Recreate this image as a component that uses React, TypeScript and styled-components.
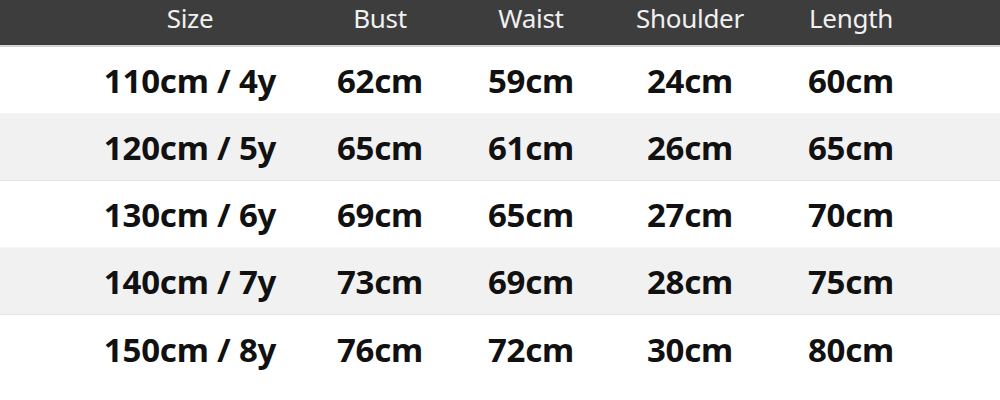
import React from 'react'
import styled, { createGlobalStyle } from 'styled-components'

const GlobalStyle = createGlobalStyle`
	html, body {
		margin: 0;
		padding: 0;
		background: #ffffff;
	}
	body {
		font-family: 'Noto Sans', 'Open Sans', Arial, sans-serif;
	}
`

const columns = ['Size', 'Bust', 'Waist', 'Shoulder', 'Length']

const rows: string[][] = [
	['110cm / 4y', '62cm', '59cm', '24cm', '60cm'],
	['120cm / 5y', '65cm', '61cm', '26cm', '65cm'],
	['130cm / 6y', '69cm', '65cm', '27cm', '70cm'],
	['140cm / 7y', '73cm', '69cm', '28cm', '75cm'],
	['150cm / 8y', '76cm', '72cm', '30cm', '80cm'],
]

export default function App() {
	return (
		<>
			<GlobalStyle />
			<Table>
				<HeaderRow>
					{columns.map(col => (
						<HeaderCell key={col}>{col}</HeaderCell>
					))}
				</HeaderRow>
				{rows.map((row, rowIndex) => (
					<BodyRow key={row[0]} shaded={rowIndex % 2 === 1}>
						{row.map((value, i) => (
							<Cell key={i}>{value}</Cell>
						))}
					</BodyRow>
				))}
			</Table>
		</>
	)
}

const Table = styled.div`
	width: 1000px;
	height: 400px;
	overflow: hidden;
	display: flex;
	flex-direction: column;
`

const Grid = styled.div`
	display: grid;
	grid-template-columns: 240px 140px 162px 156px 166px;
	padding-left: 70px;
	align-items: center;
	flex-shrink: 0;
`

const HeaderRow = styled(Grid)`
	height: 47px;
	padding-bottom: 9px;
	box-sizing: border-box;
	background: #3d3d3d;
	border-bottom: 2px solid #d4d4d4;
`

const HeaderCell = styled.div`
	text-align: center;
	color: #f0f0f0;
	font-size: 26px;
	font-weight: 400;
	letter-spacing: -0.3px;
`

const BodyRow = styled(Grid)<{ shaded?: boolean }>`
	height: 67px;
	box-sizing: border-box;
	background: ${props => (props.shaded ? '#f1f1f1' : '#ffffff')};
	border-bottom: 1px solid ${props => (props.shaded ? '#e4e4e4' : '#f4f4f4')};
	&:last-child {
		border-bottom: none;
		height: 82px;
		padding-bottom: 14px;
	}
`

const Cell = styled.div`
	text-align: center;
	color: #111111;
	font-size: 33px;
	font-weight: 700;
	letter-spacing: -0.2px;
`
